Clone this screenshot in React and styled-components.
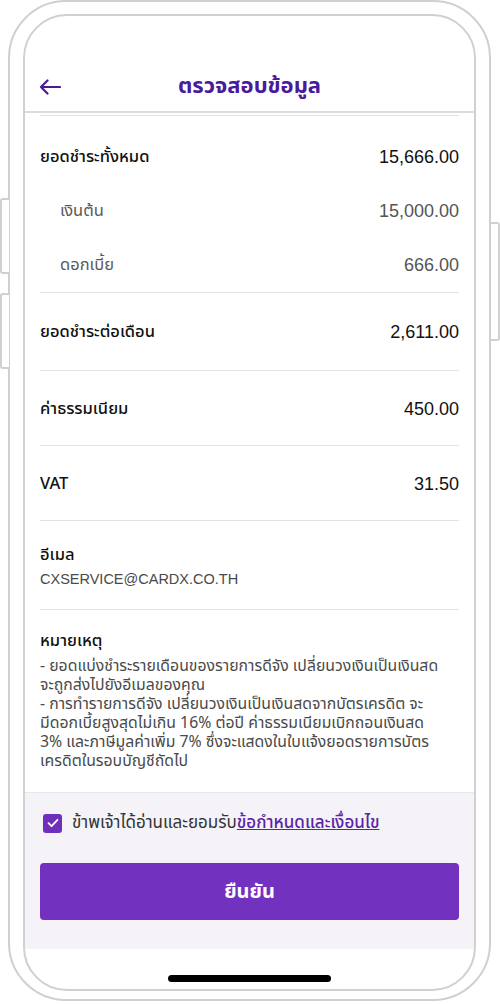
import React from 'react';
import styled, {createGlobalStyle} from 'styled-components';

const GlobalStyle = createGlobalStyle`
    html, body {
        margin: 0;
        padding: 0;
        background: #fff;
    }
    body {
        font-family: "Noto Sans Thai", "Liberation Sans", "Noto Sans", sans-serif;
        -webkit-font-smoothing: antialiased;
    }
`;

const rows = [
    {label: 'เงินต้น', value: '15,000.00'},
    {label: 'ดอกเบี้ย', value: '666.00'},
];

const singles = [
    {label: 'ยอดชำระต่อเดือน', value: '2,611.00', h: 77, pad: '0'},
    {label: 'ค่าธรรมเนียม', value: '450.00', h: 72, pad: '2px 0 0'},
    {label: 'VAT', value: '31.50', h: 72, pad: '2px 0 0'},
];

// lines broken as on the reference screen
const notes = [
    '- ยอดแบ่งชำระรายเดือนของรายการดีจัง เปลี่ยนวงเงินเป็นเงินสด',
    'จะถูกส่งไปยังอีเมลของคุณ',
    '- การทำรายการดีจัง เปลี่ยนวงเงินเป็นเงินสดจากบัตรเครดิต จะ',
    'มีดอกเบี้ยสูงสุดไม่เกิน 16% ต่อปี ค่าธรรมเนียมเบิกถอนเงินสด',
    '3% และภาษีมูลค่าเพิ่ม 7% ซึ่งจะแสดงในใบแจ้งยอดรายการบัตร',
    'เครดิตในรอบบัญชีถัดไป',
];

function BackArrow() {
    return (
        <svg width="22" height="16" viewBox="0 0 22 16" fill="none">
            <path d="M21 8H2M8.5 1.5L2 8l6.5 6.5" stroke="#4a1a9c" strokeWidth="2.2"
                  strokeLinecap="round" strokeLinejoin="round"/>
        </svg>
    );
}

function Check() {
    return (
        <svg width="12" height="10" viewBox="0 0 12 10" fill="none">
            <path d="M1.5 5.2L4.6 8.2 10.5 1.8" stroke="#fff" strokeWidth="1.8"
                  strokeLinecap="round" strokeLinejoin="round"/>
        </svg>
    );
}

export default function App() {
    return (
        <Page>
            <GlobalStyle/>
            <Phone>
                <SideButton $side="left" $top={198} $height={76}/>
                <SideButton $side="left" $top={293} $height={76}/>
                <SideButton $side="right" $top={222} $height={119}/>
                <Screen>
                    <Header>
                        <BackButton><BackArrow/></BackButton>
                        <Title>ตรวจสอบข้อมูล</Title>
                    </Header>

                    <Content>
                        <Section $pad="14px 0 0">
                            <Row $h={54}>
                                <Label>ยอดชำระทั้งหมด</Label>
                                <Value>15,666.00</Value>
                            </Row>
                            {rows.map((item, key) => (
                                <Row key={key} $h={54} $sub>
                                    <Label $sub>{item.label}</Label>
                                    <Value $sub>{item.value}</Value>
                                </Row>
                            ))}
                        </Section>

                        {singles.map((item, key) => (
                            <Section key={key} $pad={item.pad}>
                                <Row $h={item.h}>
                                    <Label>{item.label}</Label>
                                    <Value>{item.value}</Value>
                                </Row>
                            </Section>
                        ))}

                        <Section $pad="23px 0 20px">
                            <Label>อีเมล</Label>
                            <SubText>CXSERVICE@CARDX.CO.TH</SubText>
                        </Section>

                        <Section $pad="20px 0 21px">
                            <Label>หมายเหตุ</Label>
                            <Notes>
                                {notes.map((note, key) => (
                                    <Note key={key}>{note}</Note>
                                ))}
                            </Notes>
                        </Section>
                    </Content>

                    <Footer>
                        <Agree>
                            <CheckBox><Check/></CheckBox>
                            <AgreeText>
                                ข้าพเจ้าได้อ่านและยอมรับ<TermsLink>ข้อกำหนดและเงื่อนไข</TermsLink>
                            </AgreeText>
                        </Agree>
                        <ConfirmButton>ยืนยัน</ConfirmButton>
                    </Footer>

                    <HomeArea>
                        <HomeBar/>
                    </HomeArea>
                </Screen>
            </Phone>
        </Page>
    );
}

const Page = styled.div`
    width: 500px;
    height: 1004px;
    padding: 0 9px 3px 8px;
    box-sizing: border-box;
    background: #fff;
`;

const Phone = styled.div`
    position: relative;
    height: 1001px;
    box-sizing: border-box;
    border: 2px solid #d0d0d0;
    border-radius: 58px;
    padding: 12px 13px 8px 13px;
    background: #fff;
`;

const SideButton = styled.div`
    position: absolute;
    top: ${p => p.$top - 2}px;
    ${p => p.$side === 'left' ? 'left: -10px;' : 'right: -11px;'}
    width: 9px;
    height: ${p => p.$height}px;
    box-sizing: border-box;
    border: 2px solid #d0d0d0;
    ${p => p.$side === 'left' ? 'border-right: none;' : 'border-left: none;'}
    border-radius: ${p => p.$side === 'left' ? '3px 0 0 3px' : '0 3px 3px 0'};
    background: #fff;
`;

const Screen = styled.div`
    height: 100%;
    box-sizing: border-box;
    border: 2px solid #d0d0d0;
    border-radius: 44px;
    overflow: hidden;
    display: flex;
    flex-direction: column;
    background: #fff;
`;

const Header = styled.div`
    height: 97px;
    flex-shrink: 0;
    box-sizing: border-box;
    padding: 57px 15px 0;
    border-bottom: 2px solid #dcdcdc;
    display: flex;
    align-items: flex-start;
    justify-content: center;
    position: relative;
`;

const BackButton = styled.div`
    position: absolute;
    left: 14px;
    top: 63px;
    display: flex;
`;

const Title = styled.h1`
    margin: 0;
    font-size: 22px;
    line-height: 28px;
    font-weight: 700;
    color: #4a1a9c;
`;

const Content = styled.div`
    padding: 2px 15px 0 15px;
    display: flex;
    flex-direction: column;
`;

const Section = styled.div`
    border-top: 1px solid #e3e3e3;
    padding: ${p => p.$pad};
    display: flex;
    flex-direction: column;
`;

const Row = styled.div`
    height: ${p => p.$h}px;
    display: flex;
    align-items: center;
    justify-content: space-between;
    padding-left: ${p => p.$sub ? '20px' : '0'};
`;

const Label = styled.div`
    font-size: 16.5px;
    line-height: 22px;
    font-weight: ${p => p.$sub ? 400 : 500};
    color: ${p => p.$sub ? '#5a5a5a' : '#111'};
`;

const Value = styled.div`
    font-family: "Liberation Sans", sans-serif;
    font-size: 18px;
    line-height: 22px;
    color: ${p => p.$sub ? '#555' : '#111'};
`;

const SubText = styled.div`
    font-family: "Liberation Sans", sans-serif;
    font-size: 14.5px;
    line-height: 20px;
    margin-top: 3px;
    color: #4a4a4a;
`;

const Notes = styled.div`
    margin-top: 5px;
    display: flex;
    flex-direction: column;
`;

const Note = styled.div`
    font-size: 15.8px;
    line-height: 19px;
    white-space: nowrap;
    color: #4a4a4a;
`;

const Footer = styled.div`
    background: #f5f3f8;
    border-top: 1px solid #e8e6ec;
    padding: 20px 15px 29px;
    display: flex;
    flex-direction: column;
    gap: 30px;
`;

const Agree = styled.div`
    display: flex;
    align-items: center;
    height: 20px;
    gap: 10px;
    padding-left: 3px;
`;

const CheckBox = styled.div`
    width: 19px;
    height: 19px;
    border-radius: 3px;
    background: #6f2fbd;
    display: flex;
    align-items: center;
    justify-content: center;
    flex-shrink: 0;
`;

const AgreeText = styled.div`
    font-size: 17px;
    line-height: 20px;
    color: #333;
    white-space: nowrap;
`;

const TermsLink = styled.span`
    color: #5b23a8;
    font-weight: 500;
    text-decoration: underline;
`;

const ConfirmButton = styled.button`
    height: 57px;
    border: none;
    border-radius: 4px;
    background: #7231be;
    color: #fff;
    font-family: inherit;
    font-size: 20px;
    font-weight: 700;
    cursor: pointer;
`;

const HomeArea = styled.div`
    flex: 1;
    display: flex;
    align-items: flex-end;
    justify-content: center;
    padding-bottom: 7px;
`;

const HomeBar = styled.div`
    width: 163px;
    height: 7px;
    border-radius: 4px;
    background: #000;
`;
